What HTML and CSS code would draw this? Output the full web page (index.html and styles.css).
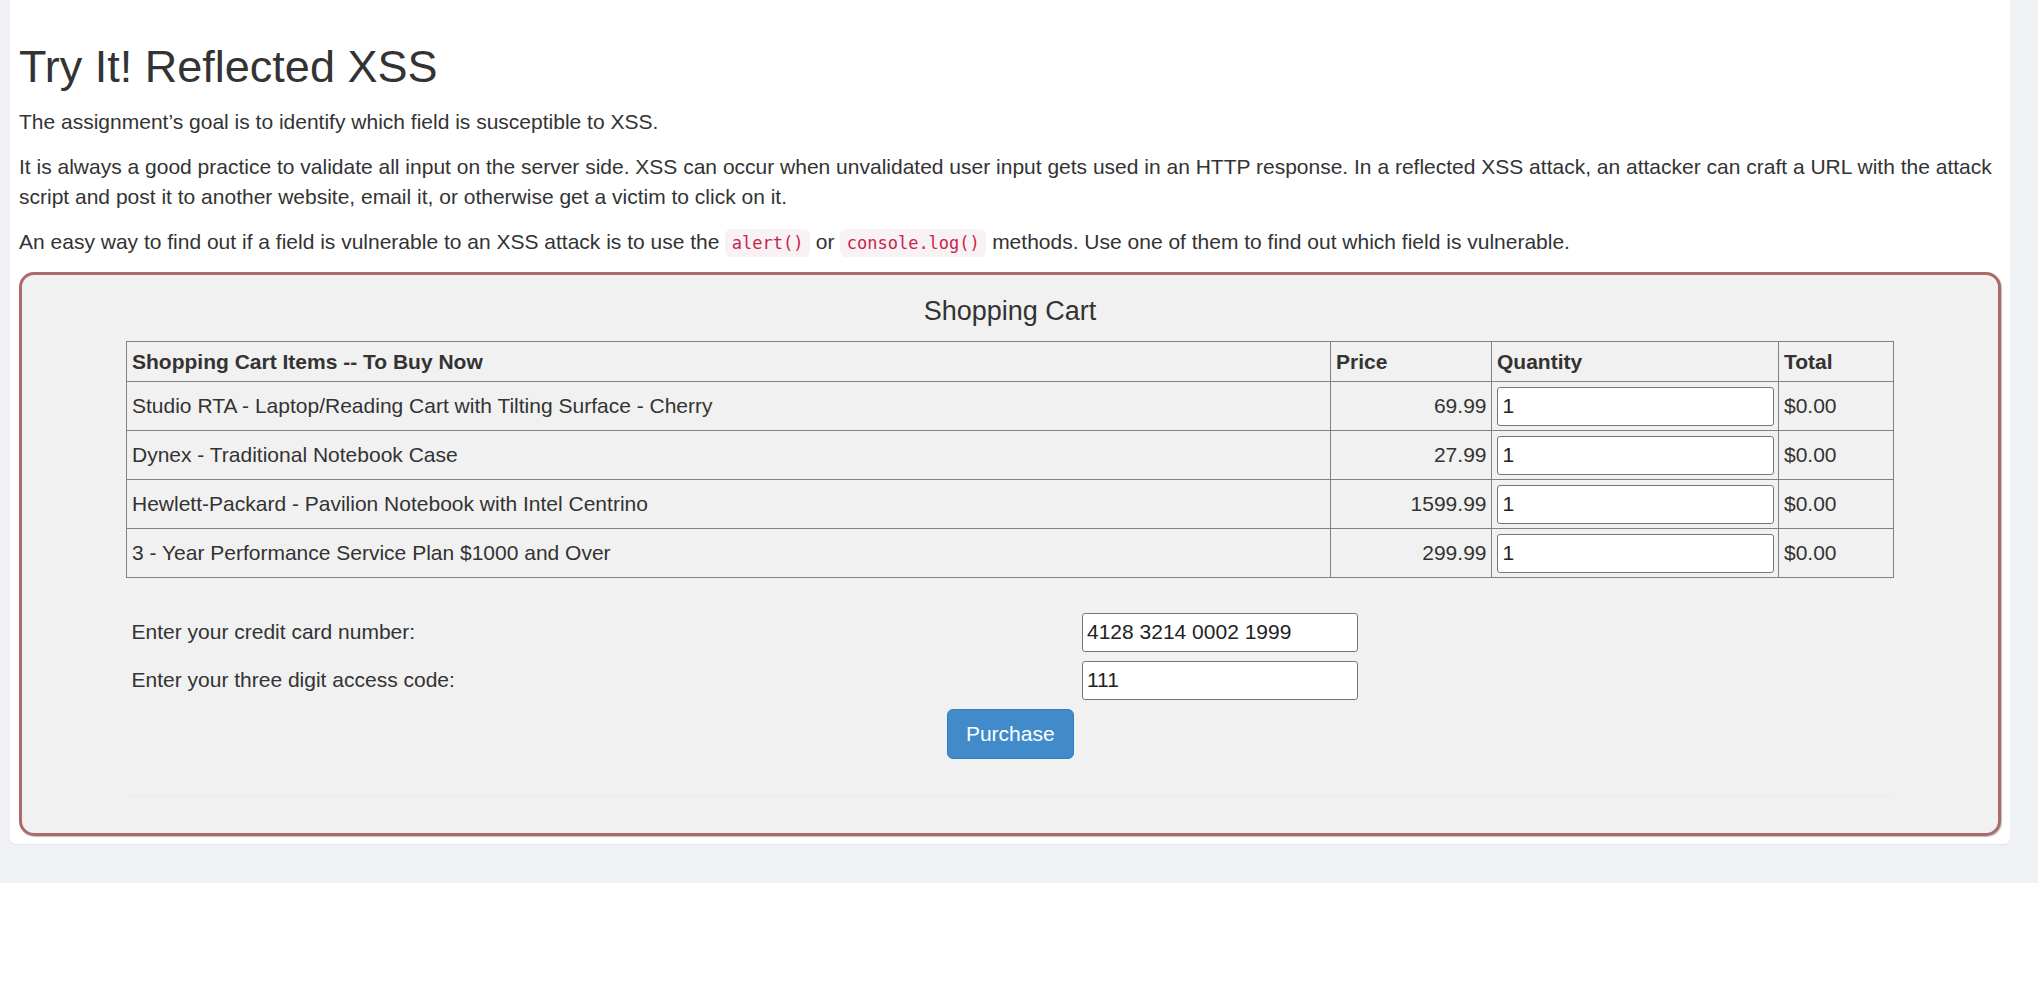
FILE: index.html
```html
<!DOCTYPE html>
<html lang="en">
<head>
<meta charset="utf-8">
<title>Try It! Reflected XSS</title>
<link rel="stylesheet" href="styles.css">
</head>
<body>
<div class="page">
  <div class="card">
    <h2 class="title">Try It! Reflected XSS</h2>
    <p>The assignment’s goal is to identify which field is susceptible to XSS.</p>
    <p>It is always a good practice to validate all input on the server side. XSS can occur when unvalidated user input gets used in an HTTP response. In a reflected XSS attack, an attacker can craft a URL with the attack script and post it to another website, email it, or otherwise get a victim to click on it.</p>
    <p>An easy way to find out if a field is vulnerable to an XSS attack is to use the <code>alert()</code> or <code>console.log()</code> methods. Use one of them to find out which field is vulnerable.</p>
    <div class="attack">
      <h4 class="cart-title">Shopping Cart</h4>
      <table class="cart">
        <colgroup>
          <col class="c-item"><col class="c-price"><col class="c-qty"><col class="c-total">
        </colgroup>
        <thead>
          <tr><th>Shopping Cart Items -- To Buy Now</th><th>Price</th><th>Quantity</th><th>Total</th></tr>
        </thead>
        <tbody>
          <tr><td>Studio RTA - Laptop/Reading Cart with Tilting Surface - Cherry</td><td class="num">69.99</td><td><input class="field" type="text" value="1"></td><td>$0.00</td></tr>
          <tr><td>Dynex - Traditional Notebook Case</td><td class="num">27.99</td><td><input class="field" type="text" value="1"></td><td>$0.00</td></tr>
          <tr><td>Hewlett-Packard - Pavilion Notebook with Intel Centrino</td><td class="num">1599.99</td><td><input class="field" type="text" value="1"></td><td>$0.00</td></tr>
          <tr><td>3 - Year Performance Service Plan $1000 and Over</td><td class="num">299.99</td><td><input class="field" type="text" value="1"></td><td>$0.00</td></tr>
        </tbody>
      </table>
      <table class="pay">
        <colgroup><col class="c-label"><col></colgroup>
        <tr><td>Enter your credit card number:</td><td><input class="field short" type="text" value="4128 3214 0002 1999"></td></tr>
        <tr><td>Enter your three digit access code:</td><td><input class="field short" type="text" value="111"></td></tr>
        <tr><td colspan="2"><div class="actions"><button class="btn" type="button">Purchase</button></div></td></tr>
      </table>
      <hr class="sep">
    </div>
  </div>
</div>
</body>
</html>
```

FILE: styles.css
```css
html, body {
  margin: 0;
  padding: 0;
  background: #ffffff;
}

body {
  font-family: "Liberation Sans", Arial, Helvetica, sans-serif;
  font-size: 21px;
  line-height: 30px;
  color: #333333;
}

.page {
  background: #f0f1f5;
  padding: 0 28px 39px 10px;
}

.card {
  background: #ffffff;
  border-radius: 0 0 6px 6px;
  box-shadow: 0 1px 1px rgba(0, 0, 0, 0.06);
  padding: 12px 9px 8px 9px;
}

.title {
  font-size: 45px;
  line-height: 1.1;
  font-weight: 500;
  margin: 30px 0 15px;
}

p {
  margin: 0 0 15px;
}

code {
  font-family: "DejaVu Sans Mono", "Liberation Mono", monospace;
  font-size: 17px;
  line-height: 1;
  color: #c7254e;
  background: #f9f2f4;
  border-radius: 6px;
  padding: 4px 6.5px;
}

.attack {
  border: 3px solid #ac6a6a;
  border-radius: 15px;
  background: #f1f1f1;
  padding: 7px 0 7.5px;
  box-shadow: 1px 1px 1px rgba(0, 0, 0, 0.25);
}

.cart-title {
  font-size: 27px;
  line-height: 1.1;
  font-weight: 500;
  text-align: center;
  margin: 15px 0;
}

.cart {
  width: 1767px;
  margin: 0 auto;
  border-collapse: collapse;
  table-layout: fixed;
}

.c-item { width: 1204px; }
.c-price { width: 161px; }
.c-qty { width: 287px; }
.c-total { width: 115px; }

.cart th,
.cart td {
  border: 1px solid #808080;
  padding: 4.5px 4.5px 4.5px 5px;
  text-align: left;
  vertical-align: middle;
}

.cart th {
  font-weight: bold;
}

.cart td.num {
  text-align: right;
  padding-right: 4.5px;
}

.field {
  display: block;
  box-sizing: border-box;
  width: 100%;
  height: 39px;
  margin: 0;
  padding: 0 4.5px;
  border: 1px solid #767676;
  border-radius: 3px;
  background: #ffffff;
  font-family: "Liberation Sans", Arial, sans-serif;
  font-size: 21px;
  color: #222222;
}

.field.short {
  width: 276px;
}

.pay {
  width: 1767px;
  margin: 30px auto 0;
  border-collapse: collapse;
  table-layout: fixed;
}

.c-label { width: 950px; }

.pay td {
  padding: 4.5px 4.5px 4.5px 5px;
  vertical-align: middle;
}

.actions {
  display: flex;
  justify-content: center;
}

.btn {
  font-family: "Liberation Sans", Arial, sans-serif;
  font-size: 21px;
  line-height: 30px;
  padding: 9px 18px;
  color: #ffffff;
  background: #428bca;
  border: 1px solid #357ebd;
  border-radius: 6px;
  cursor: pointer;
}

.sep {
  width: 1767px;
  height: 0;
  margin: 31.5px auto 30px;
  border: 0;
  border-top: 1px solid #ebebeb;
}
```
